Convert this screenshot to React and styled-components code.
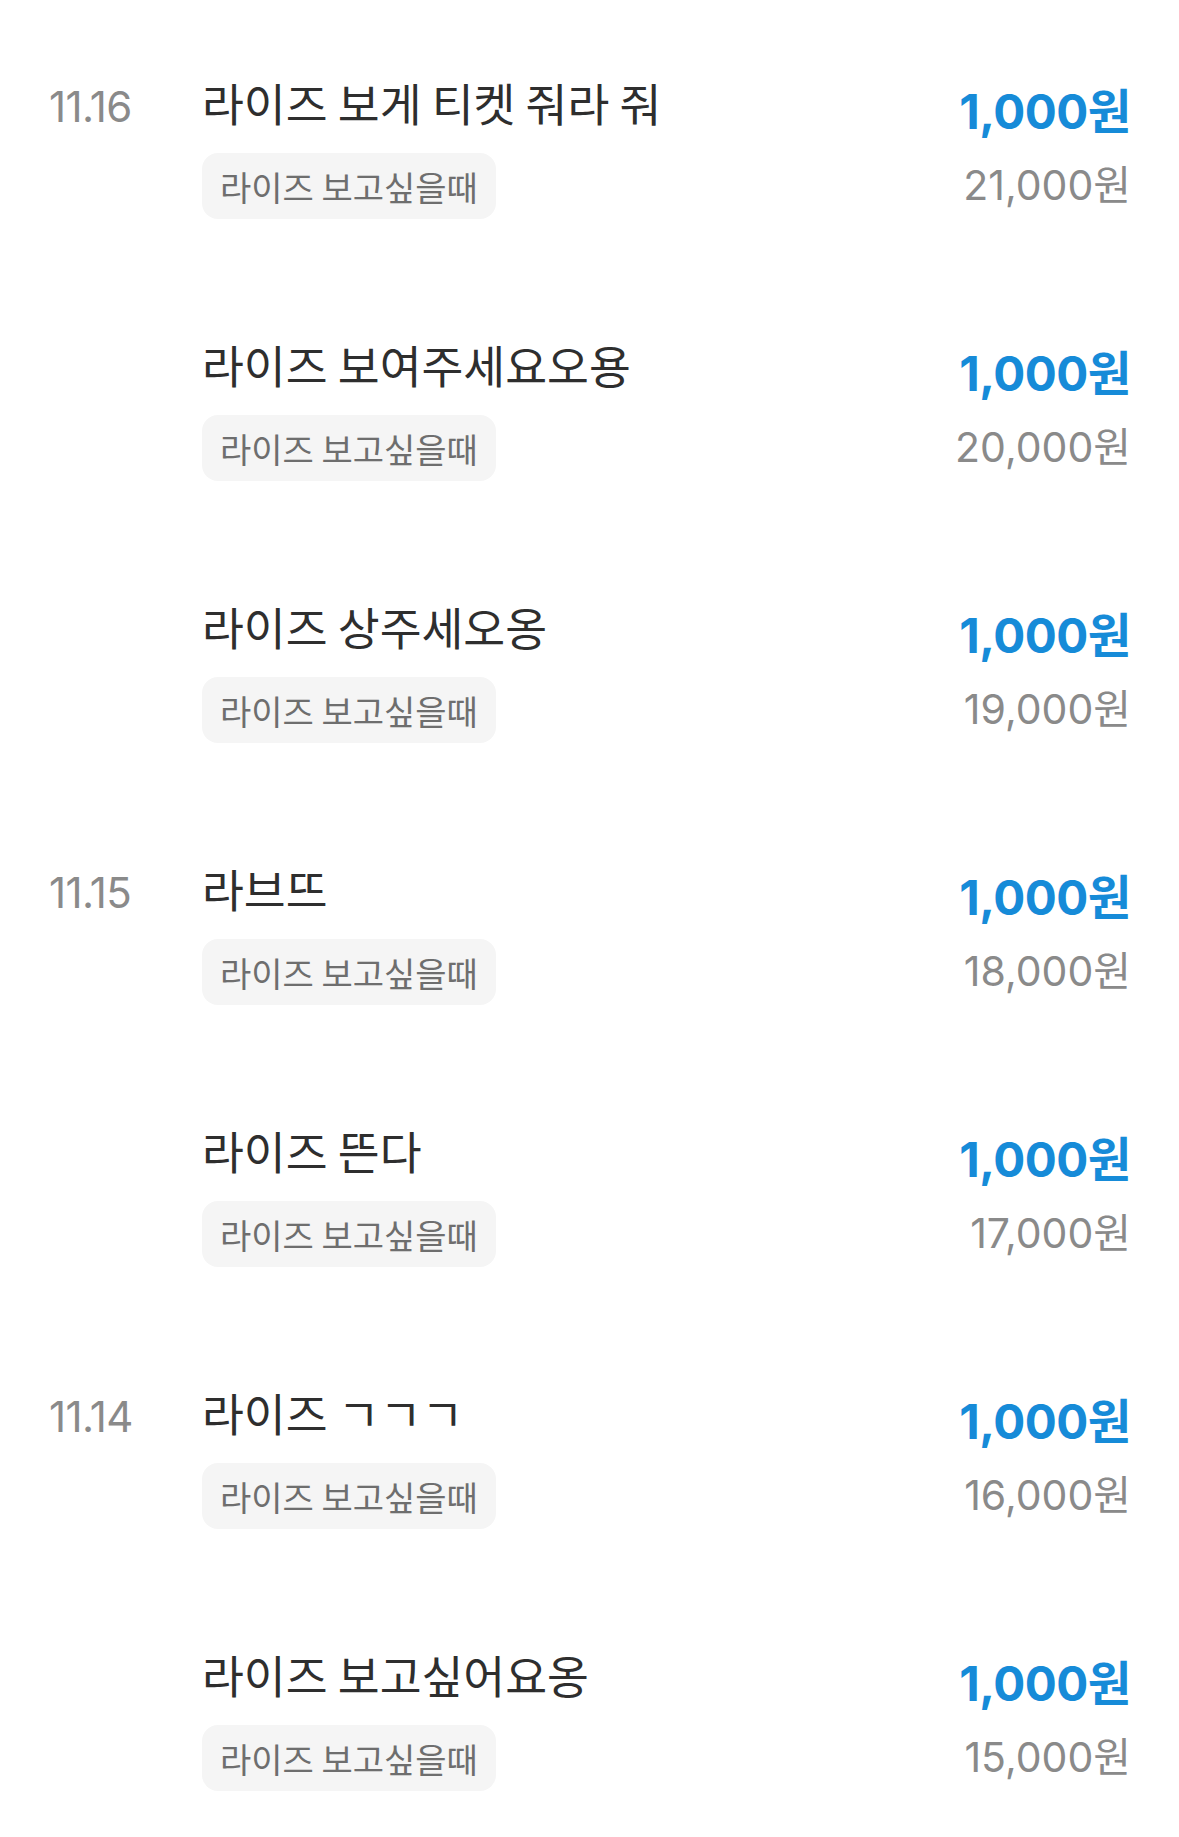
import React from "react";
import styled, { createGlobalStyle } from "styled-components";

const GlobalStyle = createGlobalStyle`
  html, body {
    margin: 0;
    padding: 0;
    background: #ffffff;
  }
  body {
    font-family: "Noto Sans CJK KR", "Noto Sans", sans-serif;
    -webkit-font-smoothing: antialiased;
  }
`;

const List = styled.div`
  width: 1179px;
  padding-top: 20px;
  box-sizing: border-box;
`;

const Row = styled.div`
  display: grid;
  grid-template-columns: 153px 1fr auto;
  grid-template-rows: 50px 66px;
  row-gap: 21px;
  align-items: center;
  padding: 62px 48px 63px 49px;
`;

const DateCell = styled.div`
  grid-column: 1;
  grid-row: 1;
  font-family: Inter, "Noto Sans CJK KR", sans-serif;
  font-size: 42px;
  letter-spacing: -0.6px;
  color: #8a8a8a;
  line-height: 50px;
`;

const Title = styled.div`
  grid-column: 2;
  grid-row: 1;
  font-family: "Noto Sans CJK KR", sans-serif;
  font-size: 45.5px;
  color: #2e2e2e;
  line-height: 50px;
  margin-bottom: 10px;
  white-space: nowrap;
`;

const Tag = styled.div`
  grid-column: 2;
  grid-row: 2;
  justify-self: start;
  display: flex;
  align-items: center;
  height: 66px;
  padding: 0 18px;
  border-radius: 16px;
  background: #f5f5f5;
  color: #6e6e6e;
  font-family: "Noto Sans CJK KR", sans-serif;
  font-size: 34px;
  white-space: nowrap;
`;

const Amount = styled.div`
  grid-column: 3;
  grid-row: ${(p) => (p.$sub ? 2 : 1)};
  justify-self: end;
  font-family: Inter, "Noto Sans CJK KR", sans-serif;
  font-size: ${(p) => (p.$sub ? "41px" : "47.5px")};
  font-weight: ${(p) => (p.$sub ? 400 : 700)};
  letter-spacing: ${(p) => (p.$sub ? "0" : "-0.5px")};
  color: ${(p) => (p.$sub ? "#8a8a8a" : "#168bd8")};
  line-height: 50px;
  white-space: nowrap;
  margin-top: ${(p) => (p.$sub ? "0" : "10px")};
  margin-bottom: ${(p) => (p.$sub ? "2px" : "0")};
`;

const rows = [
  { date: "11.16", title: "라이즈 보게 티켓 줘라 줘", total: "21,000원" },
  { date: "", title: "라이즈 보여주세요오용", total: "20,000원" },
  { date: "", title: "라이즈 상주세오옹", total: "19,000원" },
  { date: "11.15", title: "라브뜨", total: "18,000원" },
  { date: "", title: "라이즈 뜬다", total: "17,000원" },
  { date: "11.14", title: "라이즈 ㄱㄱㄱ", total: "16,000원" },
  { date: "", title: "라이즈 보고싶어요옹", total: "15,000원" },
];

export default function App() {
  return (
    <>
      <GlobalStyle />
      <List>
        {rows.map((r, i) => (
          <Row key={i}>
            <DateCell>{r.date}</DateCell>
            <Title>{r.title}</Title>
            <Amount>1,000원</Amount>
            <Tag>라이즈 보고싶을때</Tag>
            <Amount $sub>{r.total}</Amount>
          </Row>
        ))}
      </List>
    </>
  );
}
